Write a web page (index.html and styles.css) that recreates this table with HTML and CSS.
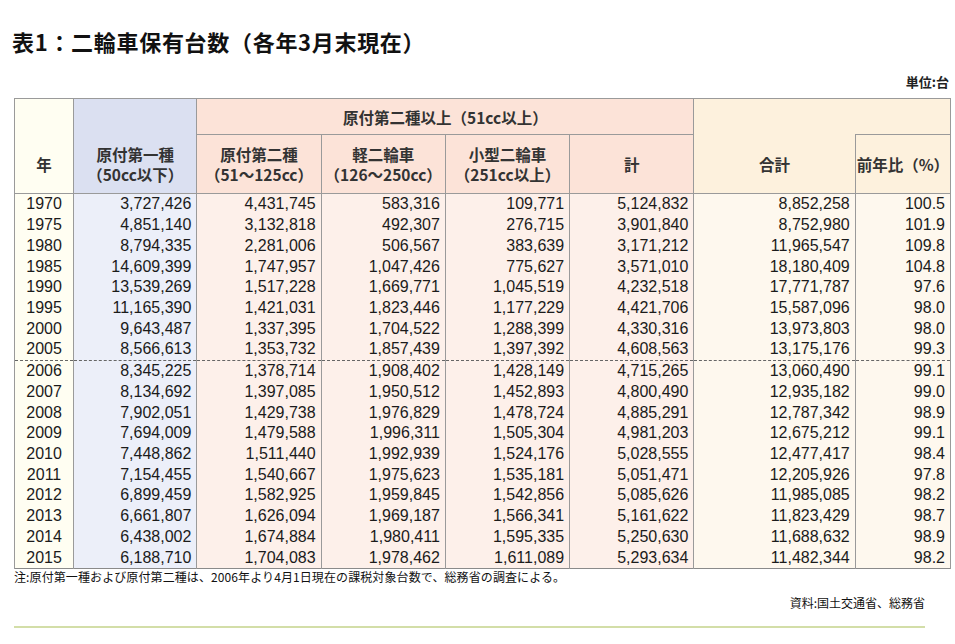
FILE: index.html
```html
<!DOCTYPE html>
<html lang="ja">
<head>
<meta charset="utf-8">
<title>表1：二輪車保有台数</title>
<link rel="stylesheet" href="styles.css">
</head>
<body>
<div class="page">
  <h1 class="title">表1：二輪車保有台数（各年3月末現在）</h1>
  <div class="unit">単位:台</div>
  <table class="data">
    <colgroup>
      <col class="c-year">
      <col class="c-blue">
      <col class="c-pink">
      <col class="c-pink">
      <col class="c-pink">
      <col class="c-pink">
      <col class="c-total">
      <col class="c-ratio">
    </colgroup>
    <thead>
      <tr class="h1">
        <th rowspan="2" class="hy tall">年</th>
        <th rowspan="2" class="hb tall">原付第一種<br>（50cc以下）</th>
        <th colspan="4" class="hp">原付第二種以上（51cc以上）</th>
        <th rowspan="2" class="ht tall noright">合計</th>
        <th class="ht noleft"></th>
      </tr>
      <tr class="h2">
        <th class="hp">原付第二種<br>（51～125cc）</th>
        <th class="hp">軽二輪車<br>（126～250cc）</th>
        <th class="hp">小型二輪車<br>（251cc以上）</th>
        <th class="hp">計</th>
        <th class="ht">前年比（%）</th>
      </tr>
    </thead>
    <tbody>
      <tr><td>1970</td><td>3,727,426</td><td>4,431,745</td><td>583,316</td><td>109,771</td><td>5,124,832</td><td>8,852,258</td><td>100.5</td></tr>
      <tr><td>1975</td><td>4,851,140</td><td>3,132,818</td><td>492,307</td><td>276,715</td><td>3,901,840</td><td>8,752,980</td><td>101.9</td></tr>
      <tr><td>1980</td><td>8,794,335</td><td>2,281,006</td><td>506,567</td><td>383,639</td><td>3,171,212</td><td>11,965,547</td><td>109.8</td></tr>
      <tr><td>1985</td><td>14,609,399</td><td>1,747,957</td><td>1,047,426</td><td>775,627</td><td>3,571,010</td><td>18,180,409</td><td>104.8</td></tr>
      <tr><td>1990</td><td>13,539,269</td><td>1,517,228</td><td>1,669,771</td><td>1,045,519</td><td>4,232,518</td><td>17,771,787</td><td>97.6</td></tr>
      <tr><td>1995</td><td>11,165,390</td><td>1,421,031</td><td>1,823,446</td><td>1,177,229</td><td>4,421,706</td><td>15,587,096</td><td>98.0</td></tr>
      <tr><td>2000</td><td>9,643,487</td><td>1,337,395</td><td>1,704,522</td><td>1,288,399</td><td>4,330,316</td><td>13,973,803</td><td>98.0</td></tr>
      <tr><td>2005</td><td>8,566,613</td><td>1,353,732</td><td>1,857,439</td><td>1,397,392</td><td>4,608,563</td><td>13,175,176</td><td>99.3</td></tr>
      <tr class="split"><td>2006</td><td>8,345,225</td><td>1,378,714</td><td>1,908,402</td><td>1,428,149</td><td>4,715,265</td><td>13,060,490</td><td>99.1</td></tr>
      <tr><td>2007</td><td>8,134,692</td><td>1,397,085</td><td>1,950,512</td><td>1,452,893</td><td>4,800,490</td><td>12,935,182</td><td>99.0</td></tr>
      <tr><td>2008</td><td>7,902,051</td><td>1,429,738</td><td>1,976,829</td><td>1,478,724</td><td>4,885,291</td><td>12,787,342</td><td>98.9</td></tr>
      <tr><td>2009</td><td>7,694,009</td><td>1,479,588</td><td>1,996,311</td><td>1,505,304</td><td>4,981,203</td><td>12,675,212</td><td>99.1</td></tr>
      <tr><td>2010</td><td>7,448,862</td><td>1,511,440</td><td>1,992,939</td><td>1,524,176</td><td>5,028,555</td><td>12,477,417</td><td>98.4</td></tr>
      <tr><td>2011</td><td>7,154,455</td><td>1,540,667</td><td>1,975,623</td><td>1,535,181</td><td>5,051,471</td><td>12,205,926</td><td>97.8</td></tr>
      <tr><td>2012</td><td>6,899,459</td><td>1,582,925</td><td>1,959,845</td><td>1,542,856</td><td>5,085,626</td><td>11,985,085</td><td>98.2</td></tr>
      <tr><td>2013</td><td>6,661,807</td><td>1,626,094</td><td>1,969,187</td><td>1,566,341</td><td>5,161,622</td><td>11,823,429</td><td>98.7</td></tr>
      <tr><td>2014</td><td>6,438,002</td><td>1,674,884</td><td>1,980,411</td><td>1,595,335</td><td>5,250,630</td><td>11,688,632</td><td>98.9</td></tr>
      <tr><td>2015</td><td>6,188,710</td><td>1,704,083</td><td>1,978,462</td><td>1,611,089</td><td>5,293,634</td><td>11,482,344</td><td>98.2</td></tr>
    </tbody>
  </table>
  <p class="note">注:原付第一種および原付第二種は、2006年より4月1日現在の課税対象台数で、総務省の調査による。</p>
  <p class="source">資料:国土交通省、総務省</p>
  <hr class="rule">
</div>
</body>
</html>
```

FILE: styles.css
```css
html, body {
  margin: 0;
  padding: 0;
  background: #ffffff;
}

.page {
  padding: 26px 0 0 14px;
  width: 937px;
  font-family: "Noto Sans CJK JP", "Noto Sans", sans-serif;
  color: #111;
}

.title {
  margin: 0 0 0 -2px;
  font-size: 22px;
  line-height: 30px;
  font-weight: 700;
  letter-spacing: 0.7px;
  color: #111;
}

.unit {
  margin-top: 18px;
  text-align: right;
  font-size: 13px;
  line-height: 16px;
  font-weight: 700;
  color: #222;
  padding-right: 2px;
}

.data {
  margin-top: 8px;
  width: 937px;
  table-layout: fixed;
  border-collapse: collapse;
  border: 1px solid #8a8a8a;
}

.c-year { width: 59px; background: #fffef2; }
.c-blue { width: 123px; background: #eceff9; }
.c-pink { width: 124px; background: #fdf0ea; }
.c-total { width: 161px; background: #fef8ee; }
.c-ratio { width: 95px; background: #fef8ee; }

.data th {
  border: 1px solid #9a9a9a;
  font-size: 15.5px;
  line-height: 20px;
  font-weight: 700;
  color: #333;
  text-align: center;
  vertical-align: middle;
  padding: 0;
}

.h1 { height: 36px; }
.h2 { height: 59px; }

.data th.tall { padding-top: 36px; }

.hy { background: #fffef2; }
.hb { background: #dbe0f1; }
.hp { background: #fce3d8; }
.ht { background: #fdf1dd; }

.data th.noright { border-right: none; }
.data th.noleft { border-left: none; }

.data td {
  height: 20.72px;
  padding: 0 5px 0 0;
  font-family: "Liberation Sans", Arial, sans-serif;
  font-size: 16px;
  line-height: 20px;
  color: #1b1b1b;
  text-align: right;
  border-left: 1px solid #9a9a9a;
  border-right: 1px solid #9a9a9a;
  white-space: nowrap;
}

.data td:first-child {
  text-align: center;
  padding: 0;
}

.data tr.split td {
  border-top: 1px dashed #666;
}

.note {
  margin: 0;
  font-size: 12px;
  line-height: 16px;
  color: #111;
  letter-spacing: 0.1px;
}

.source {
  margin: 10px 0 0 0;
  width: 911px;
  text-align: right;
  font-size: 12px;
  line-height: 16px;
  color: #111;
}

.rule {
  margin: 15px 0 0 0;
  width: 911px;
  height: 0;
  border: 0;
  border-top: 2px solid #d3dea8;
}
```
